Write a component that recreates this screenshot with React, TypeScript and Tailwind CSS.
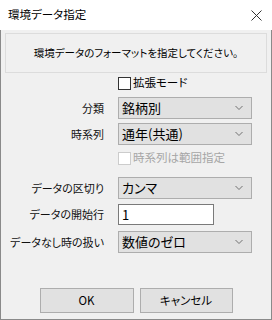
import React from 'react';

const font = "font-['Meiryo_UI','Noto_Sans_CJK_JP',sans-serif] [font-feature-settings:'palt']";

const Chevron = () => (
  <svg width="8" height="5" viewBox="0 0 8 5" className="absolute right-[8px] top-1/2 -translate-y-1/2">
    <path d="M0.5 0.5 L4 4 L7.5 0.5" fill="none" stroke="#707070" strokeWidth="1" />
  </svg>
);

const Select = ({ value }: { value: string }) => (
  <div className="relative w-[134px] h-[22px] bg-[#e1e1e1] border border-[#adadad] flex items-center pl-[3px] text-[13px] text-black">
    {value}
    <Chevron />
  </div>
);

const Row = ({ label, children, className = '' }: { label: string; children: React.ReactNode; className?: string }) => (
  <div className={`flex items-center ${className}`}>
    <div className="w-[103px] text-right text-[11px] text-[#111] whitespace-nowrap">{label}</div>
    <div className="ml-[14px]">{children}</div>
  </div>
);

const Check = ({ label, disabled = false }: { label: string; disabled?: boolean }) => (
  <div className="flex items-center h-[16px] pl-[117px]">
    <div className={`w-[13px] h-[13px] bg-white border ${disabled ? 'border-[#cccccc]' : 'border-[#333333]'}`} />
    <span className={`ml-[2px] text-[11.5px] ${disabled ? 'text-[#a6a6a6]' : 'text-black'}`}>{label}</span>
  </div>
);

export default function App() {
  return (
    <div className={`w-[272px] h-[320px] flex flex-col ${font}`}>
      {/* Title bar */}
      <div className="h-[30px] bg-white flex items-center justify-between pl-[8px] pr-[10px]">
        <span className="text-[11.5px] text-black">環境データ指定</span>
        <svg width="11" height="11" viewBox="0 0 11 11">
          <path d="M0.5 0.5 L10.5 10.5 M10.5 0.5 L0.5 10.5" stroke="#333" strokeWidth="1" />
        </svg>
      </div>

      {/* Body */}
      <div className="flex-1 flex flex-col bg-[#f0f0f0] border-x border-b border-[#8a8a8a]">
        <div className="mt-[3px] mx-[4px] h-[40px] border border-[#dcdcdc] flex items-center justify-center text-[10.5px] text-black">
          環境データのフォーマットを指定してください。
        </div>

        <div className="mt-[2px]">
          <Check label="拡張モード" />
        </div>

        <Row label="分類" className="mt-[6px]">
          <Select value="銘柄別" />
        </Row>
        <Row label="時系列" className="mt-[4px]">
          <Select value="通年(共通)" />
        </Row>

        <div className="mt-[5px]">
          <Check label="時系列は範囲指定" disabled />
        </div>

        <Row label="データの区切り" className="mt-[11px]">
          <Select value="カンマ" />
        </Row>
        <Row label="データの開始行" className="mt-[5px]">
          <div className="w-[96px] h-[21px] bg-white border border-[#7a7a7a] flex items-center pl-[3px] text-[13px] text-black">
            1
          </div>
        </Row>
        <Row label="データなし時の扱い" className="mt-[6px]">
          <Select value="数値のゼロ" />
        </Row>

        <div className="mt-auto mb-[6px] flex justify-center gap-[6px]">
          <button className="w-[94px] h-[25px] bg-[#e1e1e1] border border-[#adadad] text-[11.5px] text-black">OK</button>
          <button className="w-[93px] h-[25px] bg-[#e1e1e1] border border-[#adadad] text-[11.5px] text-black">キャンセル</button>
        </div>
      </div>
    </div>
  );
}
